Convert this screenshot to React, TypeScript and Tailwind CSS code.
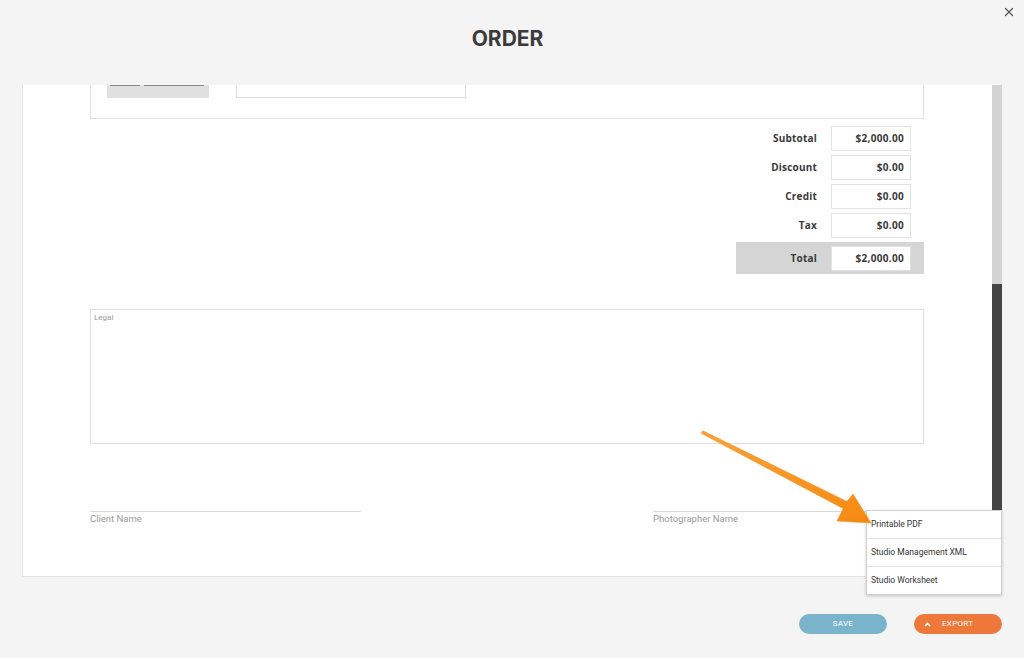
import React from "react";
import { X } from "lucide-react";

const rows = [
  { label: "Subtotal", value: "$2,000.00" },
  { label: "Discount", value: "$0.00" },
  { label: "Credit", value: "$0.00" },
  { label: "Tax", value: "$0.00" },
];

function ValueBox({ value }: { value: string }) {
  return (
    <div className="w-[80px] h-[25px] bg-white border border-[#e2e2e2] flex items-center justify-end pr-[6px] text-[10px] font-bold text-[#3a3a3a] tracking-[0.3px]">
      {value}
    </div>
  );
}

export default function App() {
  return (
    <div
      className="relative w-[1024px] h-[658px] bg-[#f4f4f4] overflow-hidden"
      style={{ fontFamily: '"Open Sans", "Liberation Sans", sans-serif' }}
    >
      {/* header */}
      <div className="relative h-[85px] flex items-start justify-center pt-[25px] pr-[9px]">
        <h1
          className="text-[21px] font-bold text-[#3b3b3b] leading-[28px] tracking-[0px]"
          style={{ fontFamily: 'Inter, "Liberation Sans", sans-serif' }}
        >
          ORDER
        </h1>
        <button className="absolute right-[8px] top-[5px] text-[#555]">
          <X size={14} strokeWidth={2.2} />
        </button>
      </div>

      {/* panel */}
      <div className="ml-[22px] w-[980px] h-[492px] bg-white border-l border-b border-[#e4e4e4] flex">
        <div className="flex-1 overflow-hidden pl-[67px] pr-[68px] flex flex-col">
          {/* clipped top box */}
          <div className="h-[34px] border-x border-b border-[#e2e2e2] relative flex items-start">
            <div className="ml-[16px] w-[102px] h-[13px] bg-[#e0e0e0] flex gap-[4px] px-[3px]">
              <div className="w-[30px] h-[1px] bg-[#8a8a8a]" />
              <div className="w-[60px] h-[1px] bg-[#8a8a8a]" />
            </div>
            <div className="ml-[27px] w-[230px] h-[13px] border-x border-b border-[#dcdcdc]" />
          </div>

          {/* totals */}
          <div className="mt-[7px] flex flex-col items-end gap-[4px]">
            {rows.map((r) => (
              <div key={r.label} className="flex items-center gap-[14px] pr-[13px]">
                <span className="text-[10px] font-bold text-[#3a3a3a] tracking-[0.2px]">{r.label}</span>
                <ValueBox value={r.value} />
              </div>
            ))}
            <div className="w-[188px] h-[32px] bg-[#d5d5d5] flex items-center justify-end gap-[14px] pr-[13px]">
              <span className="text-[10px] font-bold text-[#3a3a3a] tracking-[0.2px]">Total</span>
              <ValueBox value="$2,000.00" />
            </div>
          </div>

          {/* legal */}
          <div
            className="mt-[35px] h-[135px] border border-[#e0e0e0] px-[3px] pt-[3px] text-[8px] leading-[10px] text-[#9a9a9a]"
            style={{ fontFamily: 'Roboto, "Liberation Sans", sans-serif' }}
          >
            Legal
          </div>

          {/* signatures */}
          <div
            className="mt-[67px] flex justify-between"
            style={{ fontFamily: 'Roboto, "Liberation Sans", sans-serif' }}
          >
            <div className="w-[271px] border-t border-[#d8d8d8] pt-[1px] text-[9.5px] leading-[12px] text-[#9a9a9a]">
              Client Name
            </div>
            <div className="w-[271px] border-t border-[#d8d8d8] pt-[1px] text-[9.5px] leading-[12px] text-[#9a9a9a]">
              Photographer Name
            </div>
          </div>
        </div>
        {/* scrollbar */}
        <div className="w-[10px] flex flex-col">
          <div className="h-[199px] bg-[#d3d3d3]" />
          <div className="flex-1 bg-[#444444]" />
        </div>
      </div>

      {/* buttons */}
      <div
        className="mt-[37px] mr-[22px] flex justify-end gap-[27px]"
        style={{ fontFamily: 'Roboto, "Liberation Sans", sans-serif' }}
      >
        <button className="w-[88px] h-[20px] rounded-full bg-[#79b4cc] text-white text-[8px] tracking-[0.3px] flex items-center justify-center">
          SAVE
        </button>
        <button className="w-[88px] h-[20px] rounded-full bg-[#ee7839] text-white text-[8px] tracking-[0.3px] flex items-center justify-start pl-[10px] gap-[11px]">
          <svg width="7" height="5" viewBox="0 0 7 5">
            <path d="M1 4 L3.5 1.5 L6 4" stroke="white" strokeWidth="1.6" fill="none" />
          </svg>
          EXPORT
        </button>
      </div>

      {/* dropdown */}
      <div
        className="absolute left-[866px] top-[510px] w-[136px] bg-white border border-[#d0d0d0] shadow-[0_1px_3px_rgba(0,0,0,0.2)] flex flex-col"
        style={{ fontFamily: 'Roboto, "Liberation Sans", sans-serif' }}
      >
        <div className="h-[28px] flex items-center px-[4px] text-[8.5px] text-[#333] border-b border-[#e0e0e0]">
          Printable PDF
        </div>
        <div className="h-[28px] flex items-center px-[4px] text-[8.5px] text-[#333] border-b border-[#e0e0e0]">
          Studio Management XML
        </div>
        <div className="h-[27px] flex items-center px-[4px] text-[8.5px] text-[#333]">
          Studio Worksheet
        </div>
      </div>

      {/* arrow */}
      <svg className="absolute left-0 top-0 pointer-events-none" width="1024" height="658">
        <defs>
          <linearGradient id="ag" x1="0" y1="0" x2="1" y2="1">
            <stop offset="0" stopColor="#f9a23a" />
            <stop offset="1" stopColor="#f58a12" />
          </linearGradient>
        </defs>
        <polygon
          points="702.7,430.7 846.8,501.4 853,494 871,523 837,521 843.2,508.6 701.3,433.3"
          fill="url(#ag)"
          stroke="#f39219"
          strokeWidth="0.6"
          strokeLinejoin="round"
        />
      </svg>
    </div>
  );
}
